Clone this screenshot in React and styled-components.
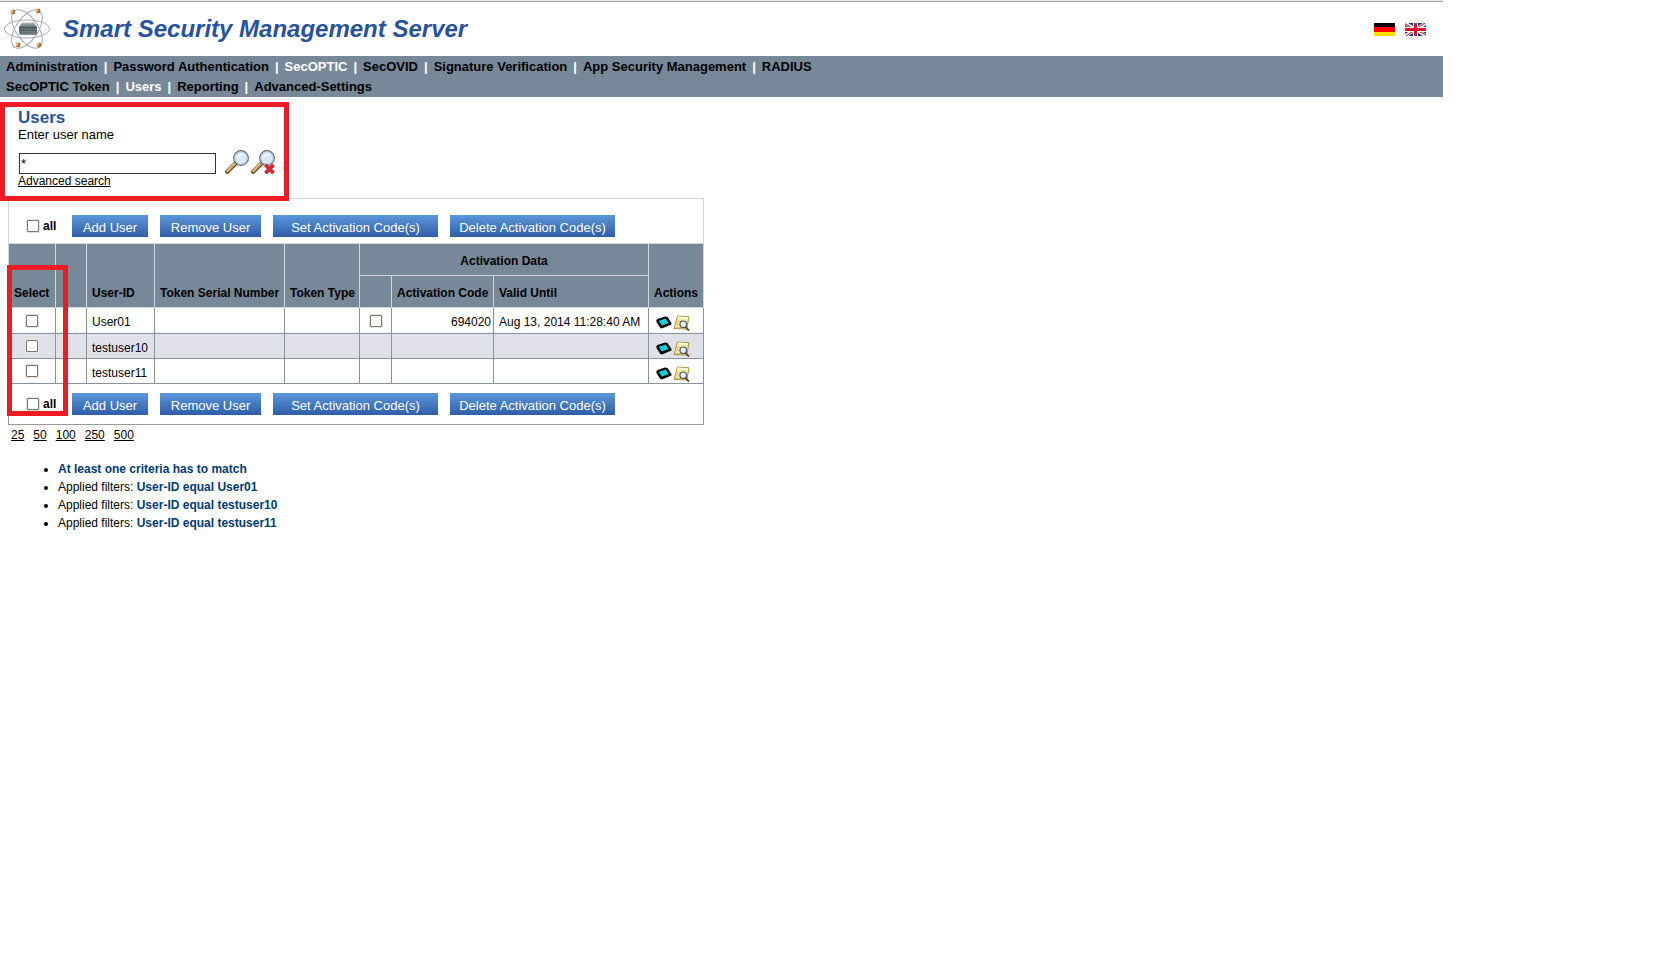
import React, { Fragment } from "react";
import styled, { createGlobalStyle } from "styled-components";

const GlobalStyle = createGlobalStyle`
  * { box-sizing: border-box; }
  body {
    margin: 0;
    background: #fff;
    color: #000;
    font-family: "Liberation Sans", Arial, sans-serif;
    font-size: 12px;
    line-height: 14px;
  }
`;

const Page = styled.div`
  padding-right: 236px;
`;

const Header = styled.header`
  display: flex;
  align-items: center;
  height: 56px;
  padding: 0 17px 0 3px;
  border-top: 1px solid #e8e8e8;
  box-shadow: inset 0 1px 0 #a9a9a9;
`;

const Title = styled.h1`
  flex: 1;
  margin: 0 0 0 11px;
  color: #26539c;
  font-size: 24px;
  line-height: 28px;
  font-style: italic;
`;

const Languages = styled.div`
  display: flex;
  gap: 10px;
  padding-top: 2px;
`;

const IconButton = styled.button`
  display: block;
  padding: 0;
  border: 0;
  background: none;
  cursor: pointer;

  svg { display: block; }
`;

const Nav = styled.nav`
  padding-top: 1px;
  background: #778899;
`;

const NavRow = styled.div`
  display: flex;
  padding: 0 6px;
  font-size: 13px;
  font-weight: bold;
  line-height: 20px;
`;

const NavLink = styled.a`
  color: ${(p) => (p.$active ? "#fff" : "#000")};
  text-decoration: none;
`;

const Divider = styled.span`
  padding: 0 6px;
  color: #fff;
`;

const Marker = styled.div`
  position: absolute;
  z-index: 1;
  inset: ${(p) => p.$inset};
  border: 5px solid #ed1c24;
  pointer-events: none;
`;

const Search = styled.form`
  position: relative;
  width: 289px;
  margin-top: 5px;
  padding: 6px 14px 13px 18px;
  height: 96px;
`;

const Heading = styled.h2`
  margin: 0;
  color: #26539c;
  font-size: 17px;
  line-height: 19px;
`;

const SearchLabel = styled.label`
  display: block;
  font-size: 13px;
  line-height: 16px;
`;

const SearchRow = styled.div`
  display: flex;
  align-items: flex-end;
  gap: 2px;
  margin-top: 7px;
  padding-left: 1px;
`;

const SearchInput = styled.input`
  width: 197px;
  height: 21px;
  margin-right: 7px;
  padding: 0 1px;
  border: 1px solid #333;
  background: #fff;
  font: 13px "Liberation Sans", Arial, sans-serif;
`;

const TextLink = styled.a`
  color: #000;
  text-decoration: underline;
`;

const AdvancedLink = styled(TextLink)`
  display: block;
  width: max-content;
`;

const Panel = styled.section`
  position: relative;
  width: 696px;
  margin-left: 8px;
`;

const Toolbar = styled.div`
  display: flex;
  align-items: center;
  gap: 12px;
  padding: ${(p) => (p.$bottom ? "9px 18px" : "16px 18px 6px")};
  border: 1px solid ${(p) => (p.$bottom ? "#999" : "#d3d6d9")};
  border-width: ${(p) => (p.$bottom ? "0 1px 1px" : "1px 1px 0")};
`;

const AllLabel = styled.label`
  display: flex;
  align-items: center;
  gap: 4px;
  width: 33px;
  font-weight: bold;
`;

const Checkbox = styled.input.attrs({ type: "checkbox" })`
  appearance: none;
  display: block;
  flex: none;
  width: 12px;
  height: 12px;
  margin: ${(p) => (p.$centered ? "0 auto" : "0")};
  border: 1px solid #77776f;
  border-radius: 1px;
  background: #fff;
  box-shadow: 0 0 0 1px #e3e3df;

  &:checked { background: #3260a8; }
`;

const ActionButton = styled.button`
  width: ${(p) => p.$width}px;
  height: 22px;
  padding: 3px 0 0;
  border: 0;
  background: linear-gradient(#5c97dc, #2f5da6);
  color: #fff;
  font: 13px "Liberation Sans", Arial, sans-serif;
  white-space: nowrap;
  cursor: pointer;
`;

const Table = styled.table`
  width: 100%;
  table-layout: fixed;
  border-collapse: separate;
  border-spacing: 0;
`;

const HeadCell = styled.th`
  height: ${(p) => (p.$top ? 33 : 32)}px;
  padding: 0 0 7px ${(p) => (p.$group ? 0 : 5)}px;
  border: solid #d3d6d9;
  border-width: ${(p) => (p.$top ? 1 : 0)}px 1px 1px ${(p) => (p.$first ? 1 : 0)}px;
  background: #778899;
  text-align: ${(p) => (p.$group ? "center" : "left")};
  vertical-align: bottom;
  white-space: nowrap;
`;

const Row = styled.tr`
  height: 25px;
  background: #fff;

  &:nth-child(even) { background: #e0e0e9; }
  &:first-child { height: 26px; }
`;

const Cell = styled.td`
  padding: ${(p) => (p.$flush ? "0" : "3px 2px 0 5px")};
  border: solid #87939c;
  border-width: 0 1px 1px 0;
  text-align: ${(p) => (p.$right ? "right" : "left")};
  white-space: nowrap;

  &:first-child { border-left-width: 1px; }
`;

const Actions = styled.div`
  display: flex;
  gap: 1px;
  padding: 2px 0 0 2px;
`;

const PageSizes = styled.nav`
  display: flex;
  gap: 9px;
  padding: 3px 11px 0;
`;

const Filters = styled.ul`
  margin: 18px 0 0;
  padding-left: 58px;
  line-height: 18px;
`;

const Criterion = styled.strong`
  color: #003a75;
`;

function Logo() {
  const atoms = [[10, 4], [35, 3], [15, 37], [36, 37]];
  return (
    <svg width="49" height="42" viewBox="0 0 49 42" aria-hidden="true">
      <defs>
        <linearGradient id="server" x1="0" y1="0" x2="0" y2="1">
          <stop offset="0" stopColor="#b9c1c2" />
          <stop offset=".4" stopColor="#566466" />
          <stop offset="1" stopColor="#87959b" />
        </linearGradient>
      </defs>
      <g fill="none" stroke="#a9a9b4" strokeWidth="1">
        <ellipse cx="24" cy="21" rx="22.5" ry="9" />
        <ellipse cx="24" cy="21" rx="22" ry="11" transform="rotate(56 24 21)" />
        <ellipse cx="24" cy="21" rx="22" ry="11" transform="rotate(-56 24 21)" />
      </g>
      <path d="M19 14.500H31L34 19V26L33 27H17L16 25V19Z" fill="url(#server)" />
      <path d="M16 19.500H34M16 22.500H34M16 25H34" stroke="#3f4c4f" strokeWidth=".7" opacity=".7" />
      {atoms.map(([x, y]) => (
        <g key={`${x}-${y}`}>
          <circle cx={x} cy={y} r="2.4" fill="#c5873f" />
          <circle cx={x - 0.8} cy={y - 0.6} r="1.1" fill="#f8dcae" />
          <path d={`M${x + 1} ${y - 2}v4`} stroke="#80521f" strokeWidth=".9" />
        </g>
      ))}
    </svg>
  );
}

function GermanFlag() {
  return (
    <svg width="21" height="13" shapeRendering="crispEdges" aria-hidden="true">
      <path d="M0 0H21V4H0Z" fill="#000" />
      <path d="M0 4H21V9H0Z" fill="#f00" />
      <path d="M0 9H21V13H0Z" fill="#ffde00" />
    </svg>
  );
}

function BritishFlag() {
  return (
    <svg width="21" height="13" viewBox="0 0 21 13" aria-hidden="true">
      <path d="M0 0H21V13H0Z" fill="#14337d" />
      <path d="M0 0L21 13M21 0L0 13" stroke="#fff" strokeWidth="3.4" />
      <path d="M0 .6L8 5.5M21 12.4L13 7.5M20 0L13 4.6M1 13L8 8.4" stroke="#dc1f3c" strokeWidth="1.1" />
      <path d="M8 0H13V13H8ZM0 4H21V9H0Z" fill="#fff" />
      <path d="M9 0H12V13H9ZM0 5H21V8H0Z" fill="#d8122f" />
    </svg>
  );
}

function Magnifier({ clear }) {
  return (
    <svg width="24" height="24" viewBox="0 0 24 24" aria-hidden="true">
      <path d="M2.200 21.800L10.500 13.500" stroke="#5a4021" strokeWidth="4.2" strokeLinecap="round" />
      <path d="M2.300 21.300L10 13.600" stroke="#c89d5f" strokeWidth="2.8" strokeLinecap="round" />
      <path d="M2 20.800L9.200 13.600" stroke="#f0dab0" strokeWidth="1" />
      <circle cx="16" cy="8" r="7.300" fill="#d5e9fa" stroke="#596268" strokeWidth="1.200" />
      <circle cx="16" cy="8" r="6.300" fill="#d5e9fa" stroke="#b4c1c8" strokeWidth="1" />
      <path d="M12 7Q13 3.500 17 3.500L19 5Q15 5 12 9Z" fill="#f6fbff" />
      {clear && (
        <>
          <path d="M14.500 15L22.500 23M22.500 15L14.500 23" stroke="#a8141c" strokeWidth="3.600" />
          <path d="M14.500 15L22.500 23M22.500 15L14.500 23" stroke="#e32832" strokeWidth="2.4" />
        </>
      )}
    </svg>
  );
}

function DeviceIcon() {
  return (
    <svg width="16" height="16" viewBox="0 0 16 16" aria-hidden="true">
      <path d="M.3 5.500L1.500 4L9 1.600L11.500 2L15.500 8V9.500L6.500 13.300L4.500 13.200L.5 7Z" fill="#080808" />
      <path d="M2.600 5.900L9.600 3.600L12.600 8L6 10.500Z" fill="#0fd0dc" />
    </svg>
  );
}

function NoteIcon() {
  return (
    <svg width="17" height="16" viewBox="0 0 17 16" aria-hidden="true">
      <path d="M4.500 1L16 1.800L13.800 14L1 13.500Z" fill="#f7eaa6" stroke="#a18a2e" strokeWidth=".9" />
      <path d="M5 1.500L15 2.200L14.600 4L4.500 3.300Z" fill="#fffbe2" />
      <path d="M4 6.500H11M3.500 9H8M2 12.200L9 12.600" stroke="#d0b759" strokeWidth=".8" />
      <path d="M12.500 12L15.500 15" stroke="#6f4a22" strokeWidth="1.8" strokeLinecap="round" />
      <circle cx="10.300" cy="9.300" r="3.300" fill="#e4eefa" stroke="#485058" strokeWidth="1.100" />
      <path d="M8.500 9Q9 7.500 10.800 7.500" fill="none" stroke="#fff" />
    </svg>
  );
}

const mainMenu = [
  "Administration",
  "Password Authentication",
  "SecOPTIC",
  "SecOVID",
  "Signature Verification",
  "App Security Management",
  "RADIUS",
];
const subMenu = ["SecOPTIC Token", "Users", "Reporting", "Advanced-Settings"];

const buttons = [
  ["Add User", 76],
  ["Remove User", 101],
  ["Set Activation Code(s)", 165],
  ["Delete Activation Code(s)", 165],
];

const columnWidths = [48, 31, 68, 130, 75, 32, 102, 155, 55];

const users = [
  { id: "User01", code: "694020", validUntil: "Aug 13, 2014 11:28:40 AM" },
  { id: "testuser10" },
  { id: "testuser11" },
];

function Menu({ items, active }) {
  return (
    <NavRow>
      {items.map((item, i) => (
        <Fragment key={item}>
          {i > 0 && <Divider>|</Divider>}
          <NavLink href="#" $active={item === active}>{item}</NavLink>
        </Fragment>
      ))}
    </NavRow>
  );
}

function UserToolbar({ bottom }) {
  return (
    <Toolbar $bottom={bottom}>
      <AllLabel>
        <Checkbox />
        all
      </AllLabel>
      {buttons.map(([label, width]) => (
        <ActionButton key={label} type="button" $width={width}>{label}</ActionButton>
      ))}
    </Toolbar>
  );
}

function UserTable() {
  return (
    <Table>
      <colgroup>
        {columnWidths.map((width, i) => <col key={i} width={width} />)}
      </colgroup>
      <thead>
        <tr>
          <HeadCell rowSpan={2} $top $first>Select</HeadCell>
          <HeadCell rowSpan={2} $top />
          <HeadCell rowSpan={2} $top>User-ID</HeadCell>
          <HeadCell rowSpan={2} $top>Token Serial Number</HeadCell>
          <HeadCell rowSpan={2} $top>Token Type</HeadCell>
          <HeadCell colSpan={3} $top $group>Activation Data</HeadCell>
          <HeadCell rowSpan={2} $top>Actions</HeadCell>
        </tr>
        <tr>
          <HeadCell />
          <HeadCell>Activation Code</HeadCell>
          <HeadCell>Valid Until</HeadCell>
        </tr>
      </thead>
      <tbody>
        {users.map((user) => (
          <Row key={user.id}>
            <Cell $flush><Checkbox $centered aria-label={`Select ${user.id}`} /></Cell>
            <Cell />
            <Cell>{user.id}</Cell>
            <Cell />
            <Cell />
            <Cell $flush>
              {user.code && <Checkbox $centered aria-label={`Activation code of ${user.id}`} />}
            </Cell>
            <Cell $right>{user.code}</Cell>
            <Cell>{user.validUntil}</Cell>
            <Cell>
              <Actions>
                <IconButton type="button" aria-label={`Token of ${user.id}`}><DeviceIcon /></IconButton>
                <IconButton type="button" aria-label={`Details of ${user.id}`}><NoteIcon /></IconButton>
              </Actions>
            </Cell>
          </Row>
        ))}
      </tbody>
    </Table>
  );
}

export default function App() {
  return (
    <>
      <GlobalStyle />
      <Page>
        <Header>
          <Logo />
          <Title>Smart Security Management Server</Title>
          <Languages>
            <IconButton type="button" aria-label="Deutsch"><GermanFlag /></IconButton>
            <IconButton type="button" aria-label="English"><BritishFlag /></IconButton>
          </Languages>
        </Header>
        <Nav>
          <Menu items={mainMenu} active="SecOPTIC" />
          <Menu items={subMenu} active="Users" />
        </Nav>
        <main>
          <Search onSubmit={(e) => e.preventDefault()}>
            <Heading>Users</Heading>
            <SearchLabel htmlFor="user-name">Enter user name</SearchLabel>
            <SearchRow>
              <SearchInput id="user-name" type="text" defaultValue="*" />
              <IconButton type="submit" aria-label="Search"><Magnifier /></IconButton>
              <IconButton type="reset" aria-label="Clear search"><Magnifier clear /></IconButton>
            </SearchRow>
            <AdvancedLink href="#">Advanced search</AdvancedLink>
            <Marker $inset="0 0 -3px 0" />
          </Search>
          <Panel>
            <UserToolbar />
            <UserTable />
            <UserToolbar bottom />
            <Marker $inset="67px 636px 9px -1px" />
          </Panel>
          <PageSizes>
            {[25, 50, 100, 250, 500].map((size) => (
              <TextLink key={size} href="#">{size}</TextLink>
            ))}
          </PageSizes>
          <Filters>
            <li><Criterion>At least one criteria has to match</Criterion></li>
            {users.map((user) => (
              <li key={user.id}>
                Applied filters: <Criterion>User-ID equal {user.id}</Criterion>
              </li>
            ))}
          </Filters>
        </main>
      </Page>
    </>
  );
}
